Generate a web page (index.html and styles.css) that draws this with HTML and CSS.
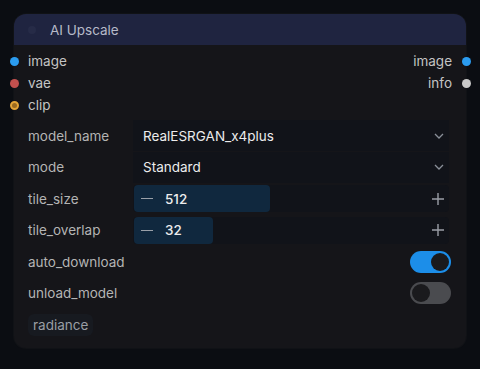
FILE: index.html
```html
<!DOCTYPE html>
<html lang="en">
<head>
    <meta charset="UTF-8">
    <title>AI Upscale</title>
    <link rel="stylesheet" href="styles.css">
</head>
<body>
<div class="node">
    <div class="node-title">
        <span class="collapse-dot"></span>
        <span class="title-text">AI Upscale</span>
    </div>
    <div class="node-body">
        <div class="slots">
            <div class="slot-row">
                <div class="slot in"><span class="dot blue"></span>image</div>
                <div class="slot out">image<span class="dot blue"></span></div>
            </div>
            <div class="slot-row">
                <div class="slot in"><span class="dot red"></span>vae</div>
                <div class="slot out">info<span class="dot grey"></span></div>
            </div>
            <div class="slot-row">
                <div class="slot in"><span class="dot orange"></span>clip</div>
            </div>
        </div>

        <div class="widgets">
            <div class="widget">
                <span class="w-label">model_name</span>
                <div class="w-box combo">
                    <span class="w-value">RealESRGAN_x4plus</span>
                    <svg class="chev" width="10" height="6" viewBox="0 0 10 6"><path d="M1 1l4 4 4-4" fill="none" stroke="#8a8f98" stroke-width="1.3"/></svg>
                </div>
            </div>
            <div class="widget">
                <span class="w-label">mode</span>
                <div class="w-box combo">
                    <span class="w-value">Standard</span>
                    <svg class="chev" width="10" height="6" viewBox="0 0 10 6"><path d="M1 1l4 4 4-4" fill="none" stroke="#8a8f98" stroke-width="1.3"/></svg>
                </div>
            </div>
            <div class="widget">
                <span class="w-label">tile_size</span>
                <div class="w-box slider">
                    <div class="fill" style="width: 43%"></div>
                    <span class="minus"></span>
                    <span class="w-value num">512</span>
                    <svg class="plus" width="12" height="12" viewBox="0 0 12 12"><path d="M6 0v12M0 6h12" stroke="#9a9ea6" stroke-width="1.4"/></svg>
                </div>
            </div>
            <div class="widget">
                <span class="w-label">tile_overlap</span>
                <div class="w-box slider">
                    <div class="fill" style="width: 25%"></div>
                    <span class="minus"></span>
                    <span class="w-value num">32</span>
                    <svg class="plus" width="12" height="12" viewBox="0 0 12 12"><path d="M6 0v12M0 6h12" stroke="#9a9ea6" stroke-width="1.4"/></svg>
                </div>
            </div>
            <div class="widget">
                <span class="w-label">auto_download</span>
                <span class="toggle on"><span class="knob"></span></span>
            </div>
            <div class="widget">
                <span class="w-label">unload_model</span>
                <span class="toggle"><span class="knob"></span></span>
            </div>
            <div class="widget">
                <span class="chip">radiance</span>
            </div>
        </div>
    </div>
</div>
</body>
</html>
```

FILE: styles.css
```css
body { margin: 0; background: #0b0d12; font-family: 'Inter', 'Liberation Sans', sans-serif; font-size: 13.5px; }
.node { margin: 14px; width: 452px; height: 334px; background: #151519; border-radius: 12px; box-shadow: 0 0 0 1px #101216; }
.node-title { height: 31px; background: #1f2440; border-radius: 12px 12px 0 0; display: flex; align-items: center; padding-left: 9px; }
.collapse-dot { width: 8px; height: 8px; border-radius: 50%; background: #262b47; margin-right: 14px; margin-left: 5px; }
.title-text { color: #b6bac8; }
.node-body { padding: 5px 17px 0 14px; }
.slot-row { display: flex; justify-content: space-between; height: 22px; align-items: center; }
.slot { position: relative; color: #c4c4c4; display: flex; align-items: center; }
.slot.out { margin-right: -3px; }
.dot { position: absolute; width: 9px; height: 9px; border-radius: 50%; box-sizing: border-box; }
.slot.in .dot { left: -18px; }
.slot.out .dot { right: -19px; }
.dot.blue { background: #2b9cf0; }
.dot.red { background: #c2504e; }
.dot.orange { background: #9a6a20; border: 2px solid #e3a437; }
.dot.grey { background: #c9c9c9; }
.widgets { margin-top: 6px; display: flex; flex-direction: column; gap: 4.6px; }
.widget { display: flex; align-items: center; height: 27px; }
.w-label { width: 105px; color: #b4b4b4; }
.w-box { flex: 1; height: 27px; background: #111319; border-radius: 4px; display: flex; align-items: center; position: relative; box-sizing: border-box; }
.w-value { color: #ececec; position: relative; }
.combo { padding: 0 5px 0 10px; justify-content: space-between; height: 31px; border-radius: 0; }
.chev { margin-right: 0; }
.slider { padding: 0 5px 0 8px; }
.fill { position: absolute; left: 1px; top: 0; bottom: 0; background: #10283e; border-radius: 4px; }
.minus { position: relative; width: 12px; height: 1.5px; background: #9aa0a8; margin-right: 12px; }
.num { flex: 1; font-weight: 500; }
.plus { position: relative; }
.toggle { margin-left: auto; margin-right: -2px; width: 41px; height: 22px; border-radius: 11px; background: #4a4b4f; display: flex; align-items: center; padding: 0 2px; box-sizing: border-box; }
.toggle.on { background: #1c8ee9; justify-content: flex-end; }
.knob { width: 18px; height: 18px; border-radius: 50%; background: #1a1a1d; }
.chip { background: #171a20; color: #9a9ea4; padding: 3px 5px; border-radius: 6px; }
```
